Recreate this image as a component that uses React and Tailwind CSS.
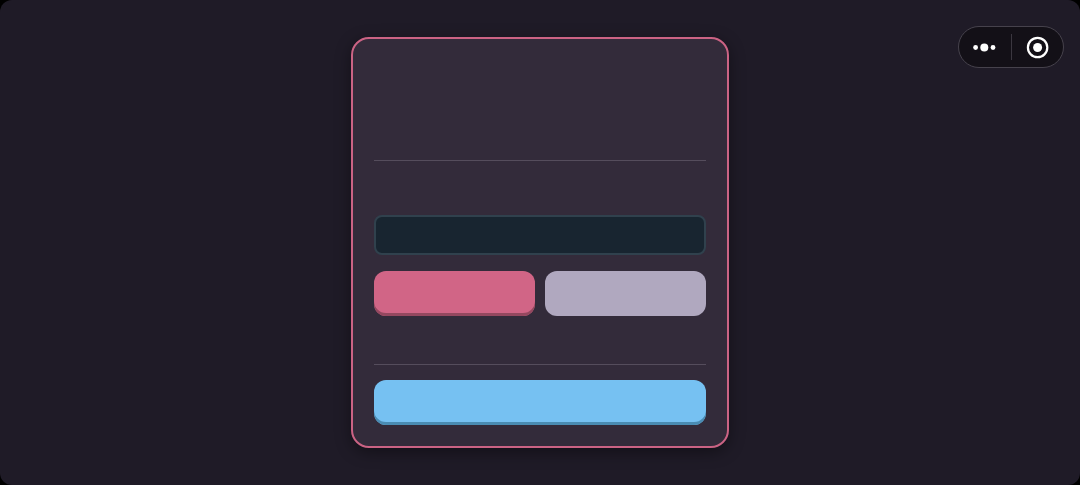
/**
 * App.jsx: dialog card with one field, a pair of actions and a main action,
 * plus the floating menu capsule in the corner.
 */
import { useState } from "react";

const ACTIONS = [
  {
    id: "confirm",
    label: "Confirm",
    style: "bg-[#d16586] shadow-[inset_0_-3px_0_#94485f]",
  },
  {
    id: "cancel",
    label: "Cancel",
    style: "bg-[#b0a8bf]",
  },
];

function Capsule() {
  return (
    <div className="absolute top-[26px] right-4 flex h-[42px] w-[106px] items-center rounded-full border border-[#46424c] bg-[#131017]">
      <button type="button" aria-label="More" className="flex h-full flex-1 items-center justify-center">
        <svg width="24" height="12" viewBox="0 0 24 12" fill="#fff" aria-hidden="true">
          <circle cx="2.6" cy="6.5" r="2.4" />
          <circle cx="11.3" cy="6.5" r="4" />
          <circle cx="20" cy="6.5" r="2.4" />
        </svg>
      </button>
      <div className="h-[26px] w-px bg-[#3b3740]" />
      <button type="button" aria-label="Close" className="flex h-full flex-1 items-center justify-center">
        <svg width="24" height="24" viewBox="0 0 24 24" fill="none" aria-hidden="true">
          <circle cx="12.6" cy="12.5" r="9.7" stroke="#fff" strokeWidth="2.2" />
          <circle cx="12.6" cy="12.5" r="4.5" fill="#fff" />
        </svg>
      </button>
    </div>
  );
}

export default function App() {
  const [value, setValue] = useState("");

  return (
    <div className="min-h-screen bg-black flex">
      <main className="relative flex flex-1 items-center justify-center rounded-xl bg-[#1f1b27]">
        <section className="w-full max-w-[378px] rounded-[18px] border-2 border-[#cb6384] bg-[#332b3a] p-[21px] shadow-[0_4px_16px_rgba(0,0,0,0.4)]">
          {/* Header */}
          <header className="min-h-[101px] border-b border-[#554d5c]" />

          {/* Field and actions */}
          <div className="flex flex-col gap-4 pt-[54px] pb-12">
            <input
              type="text"
              aria-label="Value"
              value={value}
              onChange={(e) => setValue(e.target.value)}
              className="h-10 w-full rounded-lg border-2 border-[#30414d] bg-[#182530] px-3 text-sm text-white outline-none"
            />
            <div className="flex gap-[10px]">
              {ACTIONS.map((action) => (
                <button
                  key={action.id}
                  type="button"
                  aria-label={action.label}
                  className={["h-[45px] flex-1 rounded-xl", action.style].join(" ")}
                />
              ))}
            </div>
          </div>

          {/* Footer */}
          <footer className="border-t border-[#554d5c] pt-[15px]">
            <button
              type="button"
              aria-label="Continue"
              className="block h-[45px] w-full rounded-xl bg-[#76c1f2] shadow-[inset_0_-3px_0_#4a8cb3]"
            />
          </footer>
        </section>

        <Capsule />
      </main>
    </div>
  );
}
